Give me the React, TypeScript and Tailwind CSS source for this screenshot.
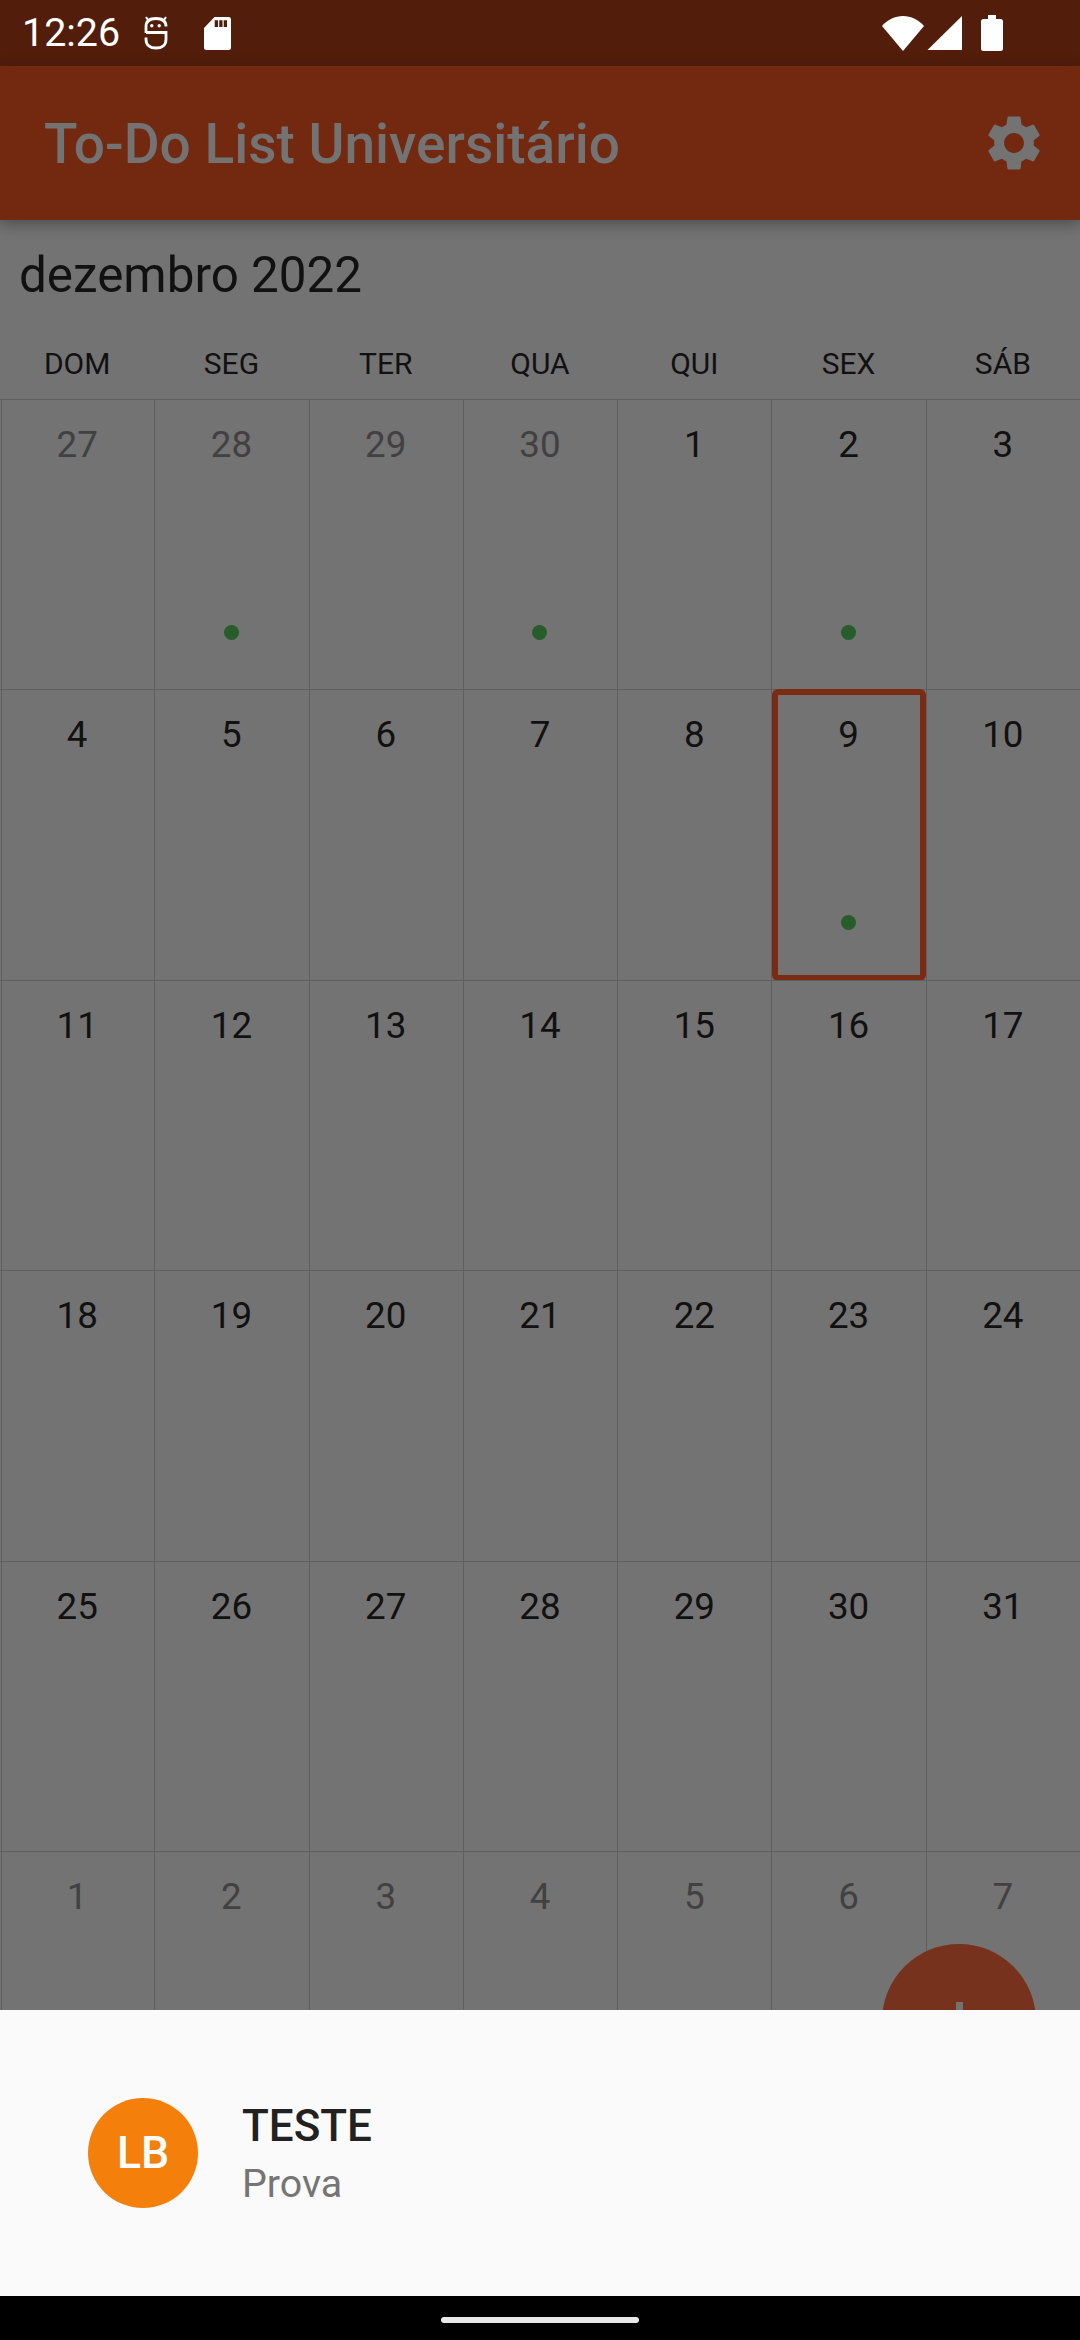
import React from "react";

const weekdays = ["DOM", "SEG", "TER", "QUA", "QUI", "SEX", "SÁB"];

type Day = { n: number; muted?: boolean; dot?: boolean; selected?: boolean };

const m = (n: number, dot = false): Day => ({ n, muted: true, dot });
const d = (n: number, dot = false, selected = false): Day => ({ n, dot, selected });

const weeks: Day[][] = [
  [m(27), m(28, true), m(29), m(30, true), d(1), d(2, true), d(3)],
  [d(4), d(5), d(6), d(7), d(8), d(9, true, true), d(10)],
  [d(11), d(12), d(13), d(14), d(15), d(16), d(17)],
  [d(18), d(19), d(20), d(21), d(22), d(23), d(24)],
  [d(25), d(26), d(27), d(28), d(29), d(30), d(31)],
  [m(1), m(2), m(3), m(4), m(5), m(6), m(7)],
];

function DebugIcon() {
  return (
    <svg width="24" height="34" viewBox="0 0 24 34" fill="none" stroke="#fff" strokeWidth="2.800">
      <path d="M2 17 V10.500 C2 5 6 2.500 12 2.500 C18 2.500 22 5 22 10.500" />
      <path d="M2 16.500 H22 V23.500 C22 29 18 32 12 32 C6 32 2 29 2 23.500 V21.500" />
      <path d="M4 4 L2 1 M20 4 L22 1" strokeWidth="2" />
      <circle cx="7.800" cy="9.700" r="1.700" fill="#fff" stroke="none" />
      <circle cx="15.200" cy="9.700" r="1.700" fill="#fff" stroke="none" />
    </svg>
  );
}

function SdIcon() {
  return (
    <svg width="27" height="33" viewBox="0 0 27 33">
      <path
        fill="#fff"
        fillRule="evenodd"
        d="M10.500 0 H24.500 A2.500 2.500 0 0 1 27 2.500 V30.500 A2.500 2.500 0 0 1 24.500 33 H2.500 A2.500 2.500 0 0 1 0 30.500 V11 Z M10.700 3.300 V10 H14 V3.300 Z M15.200 3.300 V10 H18.500 V3.300 Z M19.700 3.300 V10 H23 V3.300 Z"
      />
    </svg>
  );
}

function StatusRight() {
  return (
    <div className="flex items-center">
      <svg width="42" height="35" viewBox="0 0 42 35" className="mr-[3px]">
        <path fill="#fff" d="M0 10 C5 4 13 0 21 0 C29 0 37 4 42 10 L21 35 Z" />
      </svg>
      <svg width="35" height="34" viewBox="0 0 35 34" className="mr-[19px]">
        <path fill="#fff" d="M0.500 34 L35 0 V34 Z" />
      </svg>
      <svg width="22" height="36" viewBox="0 0 22 36">
        <path
          fill="#fff"
          d="M7 0 H15 V4 H19.500 A2.500 2.500 0 0 1 22 6.500 V33.500 A2.500 2.500 0 0 1 19.500 36 H2.500 A2.500 2.500 0 0 1 0 33.500 V6.500 A2.500 2.500 0 0 1 2.500 4 H7 Z"
        />
      </svg>
    </div>
  );
}

function Gear() {
  return (
    <svg width="66" height="66" viewBox="0 0 24 24">
      <path
        fill="#737373"
        d="M19.14,12.94c0.04-0.3,0.06-0.61,0.06-0.94c0-0.32-0.02-0.64-0.07-0.94l2.03-1.58c0.18-0.14,0.23-0.41,0.12-0.61 l-1.92-3.32c-0.12-0.22-0.37-0.29-0.59-0.22l-2.39,0.96c-0.5-0.38-1.03-0.7-1.62-0.94L14.4,2.81c-0.04-0.24-0.24-0.41-0.48-0.41 h-3.84c-0.24,0-0.43,0.17-0.47,0.41L9.25,5.35C8.66,5.59,8.12,5.92,7.63,6.29L5.24,5.33c-0.22-0.08-0.47,0-0.59,0.22L2.74,8.87 C2.62,9.08,2.66,9.34,2.86,9.48l2.03,1.58C4.84,11.36,4.8,11.69,4.8,12s0.02,0.64,0.07,0.94l-2.03,1.58 c-0.18,0.14-0.23,0.41-0.12,0.61l1.92,3.32c0.12,0.22,0.37,0.29,0.59,0.22l2.39-0.96c0.5,0.38,1.03,0.7,1.62,0.94l0.36,2.54 c0.05,0.24,0.24,0.41,0.48,0.41h3.84c0.24,0,0.44-0.17,0.47-0.41l0.36-2.54c0.59-0.24,1.13-0.56,1.62-0.94l2.39,0.96 c0.22,0.08,0.47,0,0.59-0.22l1.92-3.32c0.12-0.22,0.07-0.47-0.12-0.61L19.14,12.94z M12,15.6c-1.98,0-3.6-1.62-3.6-3.6 s1.62-3.6,3.6-3.6s3.6,1.62,3.6,3.6S13.98,15.6,12,15.6z"
      />
    </svg>
  );
}

export default function App() {
  return (
    <div className="w-[1080px] h-[2340px] flex flex-col overflow-hidden bg-[#737373] font-['Roboto',sans-serif]">
      <div className="h-[66px] shrink-0 bg-[#521d0b] flex items-center justify-between pl-[22px] pr-[77px]">
        <div className="flex items-center">
          <span className="w-[122px] text-[39.400px] leading-none text-white">12:26</span>
          <span className="mr-[36px] flex">
            <DebugIcon />
          </span>
          <SdIcon />
        </div>
        <StatusRight />
      </div>

      <header className="h-[154px] shrink-0 bg-[#732810] flex items-center justify-between pl-[44px] pr-[33px] relative z-10 shadow-[0_4px_14px_rgba(0,0,0,0.35)]">
        <span className="text-[55px] leading-none font-medium text-[#737373] pt-[2px]">To-Do List Universitário</span>
        <Gear />
      </header>

      <main className="flex-1 min-h-0 relative overflow-hidden">
        <div className="h-[108px] flex items-center pl-[19px] pt-[3px]">
          <span className="text-[49.400px] leading-none text-[#111111]">dezembro 2022</span>
        </div>
        <div className="grid grid-cols-7 h-[71px] items-center">
          {weekdays.map((w) => (
            <span key={w} className="text-center text-[30px] leading-none text-[#111111]">
              {w}
            </span>
          ))}
        </div>
        <div>
          {weeks.map((week, i) => (
            <div key={i} className="grid grid-cols-7 h-[290.400px]">
              {week.map((day, j) => (
                <div
                  key={j}
                  className={`relative border-t border-[#5f5f5f] flex flex-col items-center pt-[25px] ${j > 0 ? "border-l pr-[1px]" : ""}`}
                >
                  {j === 0 && <span className="absolute left-[1px] inset-y-0 w-[1px] bg-[#5f5f5f]" />}
                  <span className={`text-[36.750px] leading-[40px] ${day.muted ? "text-[#414141]" : "text-[#111111]"}`}>
                    {day.n}
                  </span>
                  {day.dot && (
                    <span className="absolute left-1/2 top-[224.500px] -ml-[8px] w-[15px] h-[15px] rounded-full bg-[#285c2a]" />
                  )}
                  {day.selected && (
                    <span className="absolute -inset-y-[1px] inset-x-0 rounded-[6px] border-[6px] border-[#7a2b14]" />
                  )}
                </div>
              ))}
            </div>
          ))}
        </div>
        <div className="absolute left-[882px] bottom-[-88px] w-[154px] h-[154px] rounded-full bg-[#77321d] flex items-center justify-center">
          <span className="w-[7px] h-[38px] bg-[#737373]" />
        </div>
      </main>

      <section className="h-[286px] shrink-0 bg-[#fafafa] flex items-center pl-[88px] gap-[44px] relative z-10">
        <div className="w-[110px] h-[110px] rounded-full bg-[#f57f0b] flex items-center justify-center">
          <span className="text-[44.600px] leading-none font-medium text-white">LB</span>
        </div>
        <div className="flex flex-col">
          <span className="text-[44px] leading-[58px] font-medium text-[#212121]">TESTE</span>
          <span className="text-[39.400px] leading-[52px] mt-[3px] text-[#757575]">Prova</span>
        </div>
      </section>

      <nav className="h-[44px] shrink-0 bg-black flex items-center justify-center pt-[3px]">
        <span className="w-[198px] h-[6px] rounded-full bg-[#e8e8e8]" />
      </nav>
    </div>
  );
}
